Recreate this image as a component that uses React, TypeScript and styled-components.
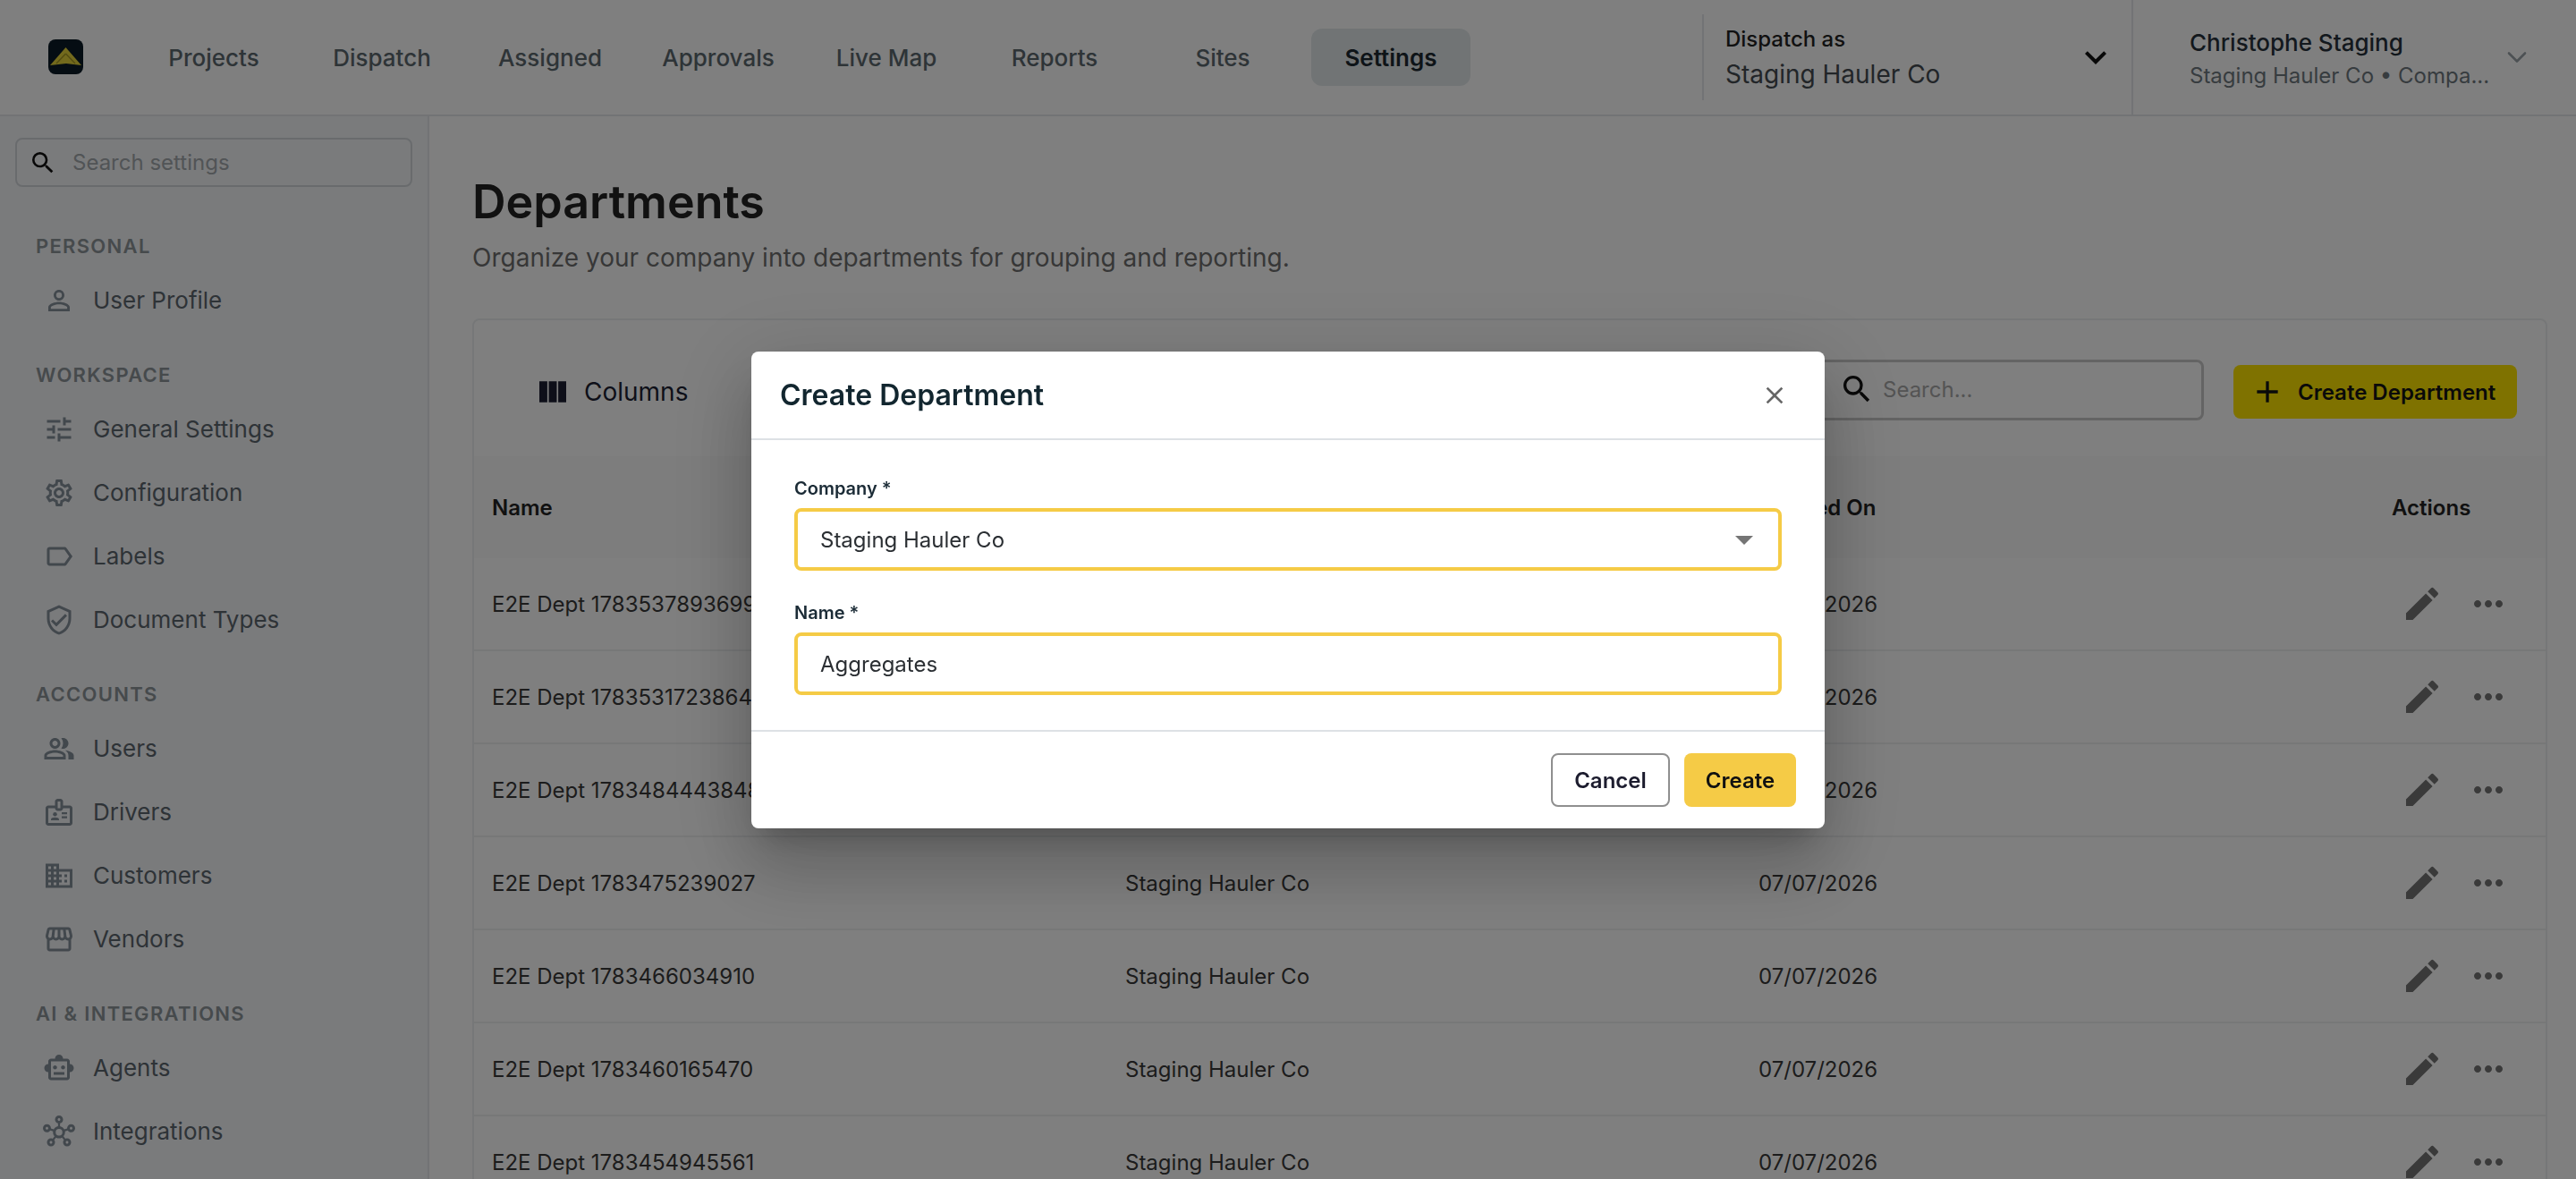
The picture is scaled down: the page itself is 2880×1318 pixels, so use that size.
import React, { ReactNode } from 'react'
import styled, { createGlobalStyle } from 'styled-components'
import { ChevronDown } from 'lucide-react'
import {
  MdAdd,
  MdArrowDropDown,
  MdClose,
  MdDomain,
  MdEdit,
  MdExpandMore,
  MdMoreHoriz,
  MdOutlineBadge,
  MdOutlineHub,
  MdOutlineLabel,
  MdOutlinePeopleAlt,
  MdOutlinePersonOutline,
  MdOutlineSettings,
  MdOutlineSmartToy,
  MdOutlineStorefront,
  MdOutlineTune,
  MdOutlineVerifiedUser,
  MdSearch,
  MdViewColumn
} from 'react-icons/md'

const GlobalStyle = createGlobalStyle`
  html, body {
    margin: 0;
    height: 100%;
    overflow: hidden;
    background: #fff;
    font-family: Inter, "Liberation Sans", sans-serif;
  }
  * {
    box-sizing: border-box;
  }
`

const Page = styled.div`
  width: 2880px;
  height: 1318px;
  display: flex;
  flex-direction: column;
  overflow: hidden;
`

// Top bar
const TopBar = styled.header`
  flex: none;
  height: 130px;
  display: flex;
  align-items: center;
  padding-left: 54px;
  background: #fff;
  border-bottom: 2px solid #e4e7ea;
`

const Logo = styled.svg`
  flex: none;
  width: 39px;
  height: 39px;
  margin-top: -2px;
`

const Nav = styled.nav`
  display: grid;
  grid-template-columns: repeat(8, 178px);
  column-gap: 10px;
  margin-left: 57px;
`

const NavItem = styled.a<{ $active?: boolean }>`
  height: 64px;
  display: flex;
  align-items: center;
  justify-content: center;
  border-radius: 12px;
  font-size: 26px;
  font-weight: ${p => (p.$active ? 600 : 500)};
  color: ${p => (p.$active ? '#1c2830' : '#5c686f')};
  background: ${p => (p.$active ? '#e3e9eb' : 'transparent')};
`

const DispatchPanel = styled.div`
  margin-left: auto;
  width: 480px;
  height: 96px;
  display: flex;
  align-items: center;
  justify-content: space-between;
  padding: 0 16px 0 24px;
  border-left: 2px solid #e4e7ea;
`

const PanelText = styled.div`
  display: flex;
  flex-direction: column;
  white-space: nowrap;
`

const DispatchLabel = styled.span`
  font-size: 24px;
  line-height: 34px;
  font-weight: 500;
  color: #222;
  margin-top: 2px;
`

const DispatchValue = styled.span`
  font-size: 28px;
  line-height: 42px;
  color: #444b50;
  margin-top: 1px;
`

const UserPanel = styled.div`
  width: 497px;
  height: 128px;
  display: flex;
  align-items: center;
  justify-content: space-between;
  padding: 0 48px 0 63px;
  border-left: 2px solid #e4e7ea;
  color: #9aa3a8;
`

const UserName = styled.span`
  font-size: 26px;
  line-height: 38px;
  font-weight: 500;
  color: #26313a;
  margin-top: 3px;
`

const UserMeta = styled.span`
  font-size: 24px;
  line-height: 36px;
  color: #6e787e;
`

// Body under the top bar
const Body = styled.div`
  flex: 1;
  min-height: 0;
  display: flex;
`

const Sidebar = styled.aside`
  flex: none;
  width: 480px;
  padding: 24px 0 0;
  background: #f5f6f9;
  border-right: 2px solid #e4e7ea;
`

const SidebarSearch = styled.div`
  width: 444px;
  height: 55px;
  margin: 0 0 18px 17px;
  display: flex;
  align-items: center;
  gap: 17px;
  padding-left: 13px;
  border: 2px solid #d3d7db;
  border-radius: 8px;
  font-size: 24px;
  color: #a3a9ad;
  svg {
    color: #111;
  }
`

const NavSection = styled.section`
  padding: 32px 0 0 40px;
`

const SectionLabel = styled.div`
  height: 32px;
  margin-bottom: 9px;
  display: flex;
  align-items: center;
  font-size: 22px;
  font-weight: 600;
  letter-spacing: 1.3px;
  color: #8c9499;
`

const SideItem = styled.a`
  height: 71px;
  display: flex;
  align-items: center;
  gap: 20px;
  padding-left: 8px;
  font-size: 26px;
  color: #5c666e;
  svg {
    color: #85909a;
    flex: none;
  }
`

const Main = styled.main`
  flex: 1;
  min-width: 0;
  padding: 64px 32px 0 48px;
  background: #fff;
`

const Heading = styled.h1`
  margin: 0;
  font-size: 52px;
  line-height: 64px;
  font-weight: 600;
  color: #222;
`

const Subheading = styled.p`
  margin: 10px 0 48px;
  font-size: 28px;
  line-height: 40px;
  color: #6f6f6f;
`

const Card = styled.div`
  border: 2px solid #eceef0;
  border-radius: 8px 8px 0 0;
  background: #fff;
`

const Toolbar = styled.div`
  height: 152px;
  display: flex;
  align-items: center;
  padding: 8px 32px 0 68px;
`

const ColumnsButton = styled.div`
  display: flex;
  align-items: center;
  gap: 15px;
  font-size: 28px;
  color: #1c1f33;
`

const TableSearch = styled.div`
  width: 432px;
  height: 68px;
  margin: 0 33px 4px auto;
  display: flex;
  align-items: center;
  gap: 9px;
  padding-left: 21px;
  border: 3px solid #c9c9c9;
  border-radius: 8px;
  font-size: 24px;
  line-height: 30px;
  color: #a8a8a8;
  svg {
    color: #111;
    margin-top: -2px;
  }
`

const PrimaryAction = styled.div`
  width: 317px;
  height: 60px;
  display: flex;
  align-items: center;
  gap: 14px;
  padding-left: 18px;
  border-radius: 8px;
  background: #ffe500;
  font-size: 24px;
  font-weight: 600;
  color: #151515;
`

const Row = styled.div<{ $head?: boolean }>`
  height: ${p => (p.$head ? 114 : 104)}px;
  display: grid;
  grid-template-columns: 708px 708px 708px 1fr;
  align-items: center;
  background: ${p => (p.$head ? '#fbfbfb' : 'transparent')};
  border-bottom: ${p => (p.$head ? 'none' : '2px solid #eef0f1')};
  font-size: 24px;
  font-weight: ${p => (p.$head ? 600 : 400)};
  color: ${p => (p.$head ? '#222' : '#383838')};
`

const Cell = styled.div`
  padding-left: 20px;
`

const ActionsCell = styled.div`
  display: flex;
  align-items: center;
  gap: 26px;
  padding-left: 30px;
  color: #757575;
`

// Dialog
const Overlay = styled.div`
  position: fixed;
  inset: 0;
  display: flex;
  align-items: center;
  justify-content: center;
  padding-top: 1px;
  background: rgba(0, 0, 0, 0.5);
`

const Dialog = styled.div`
  width: 1200px;
  height: 533px;
  display: flex;
  flex-direction: column;
  border-radius: 8px;
  background: #fff;
  box-shadow: 0 22px 30px -14px rgba(0, 0, 0, 0.2), 0 48px 76px 6px rgba(0, 0, 0, 0.14), 0 18px 92px 16px rgba(0, 0, 0, 0.12);
`

const DialogHeader = styled.div`
  flex: none;
  height: 99px;
  display: flex;
  align-items: center;
  justify-content: space-between;
  padding: 0 40px 0 32px;
  border-bottom: 2px solid #dde1e5;
  svg {
    color: #666;
  }
`

const DialogTitle = styled.h2`
  margin: 0;
  font-size: 32px;
  font-weight: 600;
  color: #12262f;
`

const DialogBody = styled.div`
  flex: 1;
  padding: 38px 48px 0;
`

const FieldLabel = styled.label`
  display: block;
  height: 32px;
  line-height: 32px;
  margin-bottom: 6px;
  font-size: 20px;
  font-weight: 600;
  color: #1b2b36;
`

const Field = styled.div`
  height: 70px;
  margin-bottom: 31px;
  display: flex;
  align-items: center;
  justify-content: space-between;
  padding: 0 14px 0 25px;
  border: 4px solid #f5cb46;
  border-radius: 8px;
  font-size: 24px;
  color: #2b2f33;
  svg {
    color: #757575;
  }
`

const DialogFooter = styled.div`
  flex: none;
  height: 110px;
  display: flex;
  align-items: center;
  justify-content: flex-end;
  gap: 16px;
  padding: 0 32px;
  border-top: 2px solid #dde1e5;
`

const Button = styled.button<{ $primary?: boolean }>`
  width: ${p => (p.$primary ? 125 : 133)}px;
  height: 60px;
  padding: 0;
  border-radius: 8px;
  border: ${p => (p.$primary ? 'none' : '2px solid #8f8f8f')};
  background: ${p => (p.$primary ? '#f5cb46' : '#fff')};
  font-family: inherit;
  font-size: 24px;
  font-weight: 600;
  color: ${p => (p.$primary ? '#111' : '#1c1c2e')};
`

const navLinks = ['Projects', 'Dispatch', 'Assigned', 'Approvals', 'Live Map', 'Reports', 'Sites', 'Settings']

const sideSections: { title: string; items: [ReactNode, string][] }[] = [
  { title: 'PERSONAL', items: [[<MdOutlinePersonOutline size={36} />, 'User Profile']] },
  {
    title: 'WORKSPACE',
    items: [
      [<MdOutlineTune size={36} />, 'General Settings'],
      [<MdOutlineSettings size={36} />, 'Configuration'],
      [<MdOutlineLabel size={36} />, 'Labels'],
      [<MdOutlineVerifiedUser size={36} />, 'Document Types']
    ]
  },
  {
    title: 'ACCOUNTS',
    items: [
      [<MdOutlinePeopleAlt size={36} />, 'Users'],
      [<MdOutlineBadge size={36} />, 'Drivers'],
      [<MdDomain size={36} />, 'Customers'],
      [<MdOutlineStorefront size={36} />, 'Vendors']
    ]
  },
  {
    title: 'AI & INTEGRATIONS',
    items: [
      [<MdOutlineSmartToy size={36} />, 'Agents'],
      [<MdOutlineHub size={36} />, 'Integrations']
    ]
  }
]

const departments = [
  'E2E Dept 1783537893699',
  'E2E Dept 1783531723864',
  'E2E Dept 1783484443848',
  'E2E Dept 1783475239027',
  'E2E Dept 1783466034910',
  'E2E Dept 1783460165470',
  'E2E Dept 1783454945561'
]

export default function App() {
  return (
    <Page>
      <GlobalStyle />
      <TopBar>
        <Logo viewBox='0 0 39 39'>
          <rect width='39' height='39' rx='8' fill='#0a1a26' />
          <path d='M19.5 9 L37 29 L20 27 L2 29 Z' fill='#e6d53a' />
          <path d='M19.5 16 L9 27 M19.5 16 L30 27' stroke='#a89a24' strokeWidth='1.5' fill='none' />
        </Logo>
        <Nav>
          {navLinks.map(link => (
            <NavItem key={link} $active={link === 'Settings'}>{link}</NavItem>
          ))}
        </Nav>
        <DispatchPanel>
          <PanelText>
            <DispatchLabel>Dispatch as</DispatchLabel>
            <DispatchValue>Staging Hauler Co</DispatchValue>
          </PanelText>
          <MdExpandMore size={48} color='#111' />
        </DispatchPanel>
        <UserPanel>
          <PanelText>
            <UserName>Christophe Staging</UserName>
            <UserMeta>Staging Hauler Co • Compa...</UserMeta>
          </PanelText>
          <ChevronDown size={36} strokeWidth={1.75} />
        </UserPanel>
      </TopBar>
      <Body>
        <Sidebar>
          <SidebarSearch>
            <MdSearch size={32} />
            Search settings
          </SidebarSearch>
          {sideSections.map(section => (
            <NavSection key={section.title}>
              <SectionLabel>{section.title}</SectionLabel>
              {section.items.map(([icon, label]) => (
                <SideItem key={label}>{icon}{label}</SideItem>
              ))}
            </NavSection>
          ))}
        </Sidebar>
        <Main>
          <Heading>Departments</Heading>
          <Subheading>Organize your company into departments for grouping and reporting.</Subheading>
          <Card>
            <Toolbar>
              <ColumnsButton><MdViewColumn size={40} />Columns</ColumnsButton>
              <TableSearch><MdSearch size={40} />Search...</TableSearch>
              <PrimaryAction><MdAdd size={40} />Create Department</PrimaryAction>
            </Toolbar>
            <Row $head>
              <Cell>Name</Cell>
              <Cell>Company</Cell>
              <Cell>Created On</Cell>
              <Cell>Actions</Cell>
            </Row>
            {departments.map(name => (
              <Row key={name}>
                <Cell>{name}</Cell>
                <Cell>Staging Hauler Co</Cell>
                <Cell>07/07/2026</Cell>
                <ActionsCell><MdEdit size={48} /><MdMoreHoriz size={48} /></ActionsCell>
              </Row>
            ))}
          </Card>
        </Main>
      </Body>
      <Overlay>
        <Dialog>
          <DialogHeader>
            <DialogTitle>Create Department</DialogTitle>
            <MdClose size={32} />
          </DialogHeader>
          <DialogBody>
            <FieldLabel>Company *</FieldLabel>
            <Field>Staging Hauler Co<MdArrowDropDown size={48} /></Field>
            <FieldLabel>Name *</FieldLabel>
            <Field>Aggregates</Field>
          </DialogBody>
          <DialogFooter>
            <Button>Cancel</Button>
            <Button $primary>Create</Button>
          </DialogFooter>
        </Dialog>
      </Overlay>
    </Page>
  )
}
